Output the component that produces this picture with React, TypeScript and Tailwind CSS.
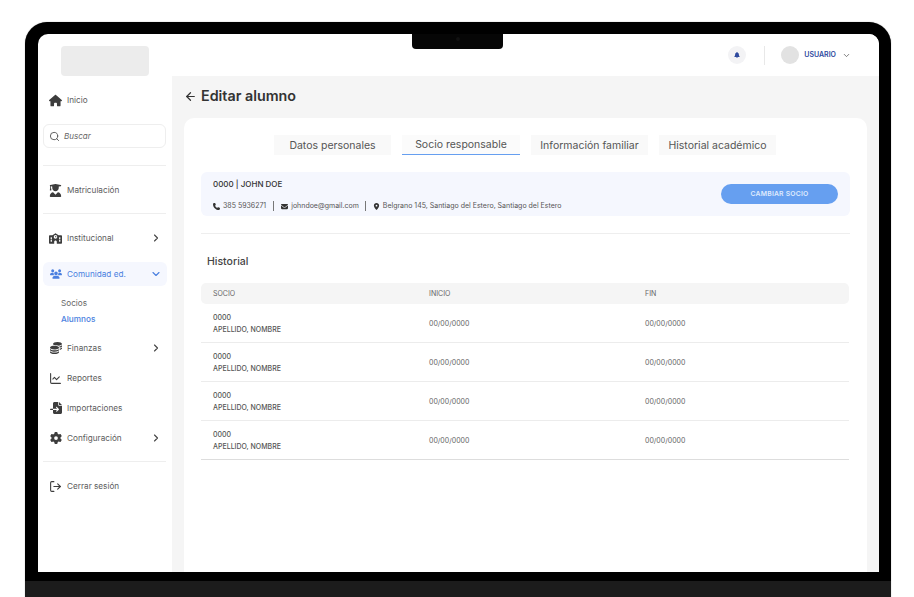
import React from 'react';
import { ArrowLeft, ChartLine, ChevronDown, ChevronRight, LogOut, Search } from 'lucide-react';
import {
  FaBell,
  FaCoins,
  FaEnvelope,
  FaFileImport,
  FaGear,
  FaHouse,
  FaLocationDot,
  FaPhone,
  FaSchool,
  FaUserGraduate,
  FaUsers,
} from 'react-icons/fa6';

const tabs = ['Datos personales', 'Socio responsable', 'Información familiar', 'Historial académico'];

const SideItem = ({ icon, label, arrow }: { icon: React.ReactNode; label: string; arrow?: boolean }) => (
  <div className="flex h-[30px] items-center pl-[6px] pr-[5px] text-[#5c5c5c]">
    <span className="flex w-[13px] justify-center text-[#3d3d3d]">{icon}</span>
    <span className="ml-[5px] flex-1 text-[8.2px]">{label}</span>
    {arrow && <ChevronRight size={12} strokeWidth={2.25} className="text-[#444]" />}
  </div>
);

const Divider = ({ className }: { className: string }) => <div className={`h-px bg-[#eeeeee] ${className}`} />;

const Sidebar = () => (
  <aside className="flex w-[134px] shrink-0 flex-col px-[5px] pt-[12px]">
    <div className="ml-[18px] h-[30px] w-[88px] rounded-[4px] bg-[#ececec]" />
    <div className="mt-[9px]">
      <SideItem icon={<FaHouse size={13} />} label="Inicio" />
    </div>
    <div className="mt-[9px] flex h-[24px] w-[123px] items-center rounded-[6px] border border-[#eeeeee] pl-[5px] text-[#555]">
      <Search size={11} strokeWidth={2} />
      <span className="ml-[4px] text-[8px] italic text-[#666]">Buscar</span>
    </div>
    <Divider className="mt-[17px] w-[123px]" />
    <div className="mt-[9px]">
      <SideItem icon={<FaUserGraduate size={13} />} label="Matriculación" />
    </div>
    <Divider className="mt-[8px] w-[123px]" />
    <div className="mt-[9px]">
      <SideItem icon={<FaSchool size={13} />} label="Institucional" arrow />
    </div>
    <div className="mt-[9px] flex h-[24px] w-[124px] items-center rounded-[6px] bg-[#f5f7fe] pl-[6px] pr-[5px] text-[#4a7fe0]">
      <span className="flex w-[13px] justify-center">
        <FaUsers size={12} />
      </span>
      <span className="ml-[5px] flex-1 text-[8.2px]">Comunidad ed.</span>
      <ChevronDown size={12} strokeWidth={2.25} />
    </div>
    <div className="ml-[18px] mt-[12px] flex flex-col gap-[5px] text-[8.2px] leading-[11px]">
      <span className="text-[#666]">Socios</span>
      <span className="font-medium text-[#4a7fe0]">Alumnos</span>
    </div>
    <div className="mt-[8px]">
      <SideItem icon={<FaCoins size={12} />} label="Finanzas" arrow />
      <SideItem icon={<ChartLine size={13} strokeWidth={2} />} label="Reportes" />
      <SideItem icon={<FaFileImport size={12} />} label="Importaciones" />
      <SideItem icon={<FaGear size={12} />} label="Configuración" arrow />
    </div>
    <Divider className="mt-[8px] w-[123px]" />
    <div className="mt-[9px]">
      <SideItem icon={<LogOut size={13} strokeWidth={2} className="text-[#3d3d3d]" />} label="Cerrar sesión" />
    </div>
  </aside>
);

const Banner = () => (
  <div className="ml-[17px] mt-[17px] flex h-[44px] w-[649px] items-center justify-between rounded-[6px] bg-[#f5f7fe] pl-[12px] pr-[12px]">
    <div className="pt-px">
      <div className="text-[8px] font-medium leading-[12px] text-[#333]">0000 | JOHN DOE</div>
      <div className="mt-[11px] flex items-center text-[7px] leading-[10px] text-[#555]">
        <FaPhone size={7} className="mr-[3px] text-[#333]" />
        <span>385 5936271</span>
        <span className="mx-[7px] h-[10px] w-px bg-[#777]" />
        <FaEnvelope size={7} className="mr-[3px] text-[#333]" />
        <span>johndoe@gmail.com</span>
        <span className="ml-[6px] mr-[7px] h-[10px] w-px bg-[#777]" />
        <FaLocationDot size={7} className="mr-[3px] text-[#333]" />
        <span>Belgrano 145, Santiago del Estero, Santiago del Estero</span>
      </div>
    </div>
    <button className="h-[20px] w-[117px] rounded-full bg-[#669ff0] pt-px text-[6.8px] font-semibold tracking-[0.2px] text-[#dfeafd]">
      CAMBIAR SOCIO
    </button>
  </div>
);

const Historial = () => (
  <div className="ml-[17px] w-[648px]">
    <div className="ml-[6px] mt-[20px] text-[10.5px] font-medium leading-[16px] text-[#444]">Historial</div>
    <div className="mt-[13px] grid h-[21px] grid-cols-[216px_216px_1fr] items-center rounded-[5px] bg-[#f5f5f5] pl-[12px] pt-px text-[7px] text-[#666]">
      <span>SOCIO</span>
      <span>INICIO</span>
      <span>FIN</span>
    </div>
    {[0, 1, 2, 3].map(row => (
      <div
        key={row}
        className={`grid h-[39px] grid-cols-[216px_216px_1fr] items-center border-b-[1.5px] pl-[12px] pt-[2px] text-[7px] text-[#666] ${
          row === 3 ? 'border-[#dddddd]' : 'border-[#ececec]'
        }`}
      >
        <div className="font-medium leading-[12px] text-[#555]">
          <div>0000</div>
          <div>APELLIDO, NOMBRE</div>
        </div>
        <span>00/00/0000</span>
        <span>00/00/0000</span>
      </div>
    ))}
  </div>
);

const Main = () => (
  <main className="min-w-0 flex-1 bg-[#f5f5f5] pl-[12px] pr-[12px]">
    <div className="flex h-[42px] items-center pb-[2px] text-[#333]">
      <ArrowLeft size={13} strokeWidth={2.25} />
      <h1 className="ml-[4px] text-[14.3px] font-semibold leading-none">Editar alumno</h1>
    </div>
    <section className="h-[454px] overflow-hidden rounded-t-[10px] bg-white pt-[17px]">
      <div className="ml-[90px] flex gap-[11px]">
        {tabs.map((tab, i) => (
          <div
            key={tab}
            className={`flex h-[20px] items-center justify-center pt-px text-[10.5px] text-[#555] ${
              i === 1 ? 'w-[118px] border-b-[1.5px] border-[#669ff0] bg-[#fbfbfb]' : 'w-[117px] bg-[#f9f9f9]'
            }`}
          >
            {tab}
          </div>
        ))}
      </div>
      <Banner />
      <Divider className="ml-[17px] mt-[17px] w-[649px]" />
      <Historial />
    </section>
  </main>
);

const App = () => (
  <div className="h-[597px] w-[914px] overflow-hidden bg-white font-['Inter',sans-serif]">
    <div className="pl-[25px] pt-[22px]">
      <div className="relative h-[575px] w-[866px] rounded-t-[22px] bg-black px-[13px] pt-[12px] shadow-[0_0_1px_#777]">
        {/* camera notch */}
        <div className="absolute left-[387px] top-[12px] z-10 flex h-[15px] w-[91px] items-start justify-center rounded-b-[4px] bg-[#060606]">
          <span className="mt-[3px] h-[4px] w-[4px] rounded-full bg-[#111111]" />
        </div>
        <div className="h-[538px] w-[841px] overflow-hidden rounded-t-[10px] bg-white">
          <div className="relative flex h-full">
            <Sidebar />
            <div className="flex min-w-0 flex-1 flex-col">
              <header className="flex h-[42px] shrink-0 items-center justify-end bg-white pr-[28px]">
                <div className="flex h-[18px] w-[18px] items-center justify-center rounded-full bg-[#f3f3f5] text-[#2f4a9e]">
                  <FaBell size={6} />
                </div>
                <div className="ml-[18px] mr-[16px] h-[19px] w-px bg-[#e8e8e8]" />
                <div className="h-[18px] w-[18px] rounded-full bg-[#e2e2e2]" />
                <span className="ml-[5px] text-[7px] font-semibold text-[#2f4a9e]">USUARIO</span>
                <ChevronDown size={9} strokeWidth={2} className="ml-[6px] text-[#555]" />
              </header>
              <Main />
            </div>
          </div>
        </div>
        {/* laptop base */}
        <div className="absolute bottom-0 left-0 h-[16px] w-full bg-[#1c1c1c]" />
      </div>
    </div>
  </div>
);

export default App;
